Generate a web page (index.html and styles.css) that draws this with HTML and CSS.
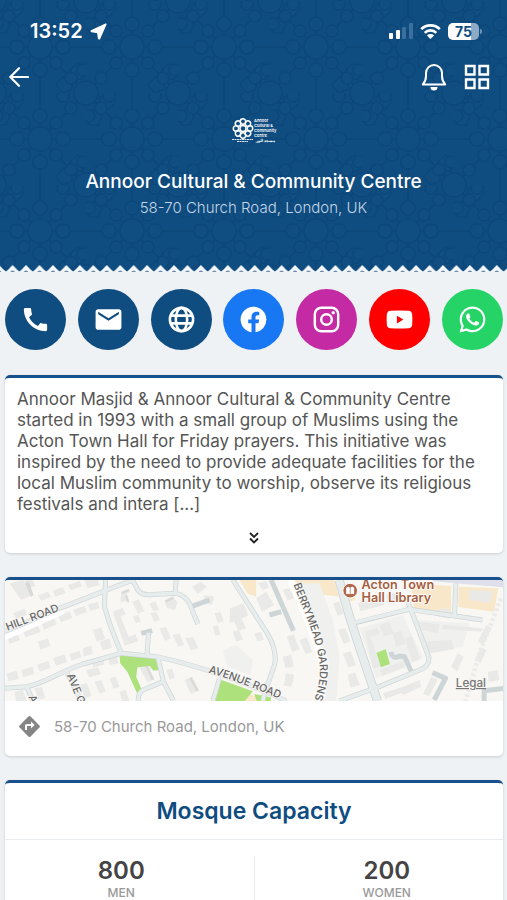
FILE: index.html
```html
<!DOCTYPE html>
<html lang="en">
<head>
<meta charset="utf-8">
<meta name="viewport" content="width=device-width, initial-scale=1">
<title>Annoor Cultural &amp; Community Centre</title>
<link rel="stylesheet" href="styles.css">
</head>
<body>
<header class="hero">
  <svg class="hero-pattern" aria-hidden="true">
    <defs>
      <pattern id="tiles" x="-6" y="1" width="92" height="92" patternUnits="userSpaceOnUse">
        <g id="rosettes" fill="#115084" stroke="#0b4475" stroke-width="1.6">
          <path fill="none" d="M0 46H92M46 0V92M0 0L92 92M92 0L0 92"/>
          <path d="M0 23l8-7 8 7-4 9H4zM92 69l-8-7-8 7 4 9h8zM23 0l7 8-7 8-9-4V4zM69 92l-7-8 7-8 9 4v8z"/>
          <circle cx="46" cy="46" r="12"/>
          <circle cx="0" cy="0" r="12"/><circle cx="92" cy="0" r="12"/><circle cx="0" cy="92" r="12"/><circle cx="92" cy="92" r="12"/>
          <circle cx="46" cy="23" r="7"/><circle cx="46" cy="69" r="7"/><circle cx="23" cy="46" r="7"/><circle cx="69" cy="46" r="7"/>
          <circle cx="30" cy="30" r="6"/><circle cx="62" cy="30" r="6"/><circle cx="30" cy="62" r="6"/><circle cx="62" cy="62" r="6"/>
          <circle cx="23" cy="3" r="6"/><circle cx="69" cy="3" r="6"/><circle cx="3" cy="23" r="6"/><circle cx="89" cy="69" r="6"/>
          <circle cx="15" cy="15" r="6"/><circle cx="77" cy="15" r="6"/><circle cx="15" cy="77" r="6"/><circle cx="77" cy="77" r="6"/>
        </g>
      </pattern>
    </defs>
    <rect width="100%" height="100%" fill="url(#tiles)"/>
  </svg>

  <div class="status">
    <div class="status-side">
      <span class="clock">13:52</span>
      <svg width="17" height="17" viewBox="0 0 17 17" aria-label="Location in use"><path fill="#fff" stroke="#fff" stroke-width="1.600" stroke-linejoin="round" d="M15.800 1.200L1.300 8l.3.500 6.200.9.900 6.200.6.200z"/></svg>
    </div>
    <div class="status-side">
      <svg width="24" height="17" viewBox="0 0 24 17" aria-label="Signal">
        <rect x="0" y="10" width="4" height="6" rx="1" fill="#fff"/><rect x="7" y="7" width="4" height="9" rx="1" fill="#fff"/>
        <rect x="13" y="4" width="4" height="12" rx="1" fill="#3b6f9d"/><rect x="20" y="0" width="4" height="16" rx="1" fill="#3b6f9d"/>
      </svg>
      <svg class="wifi" width="21" height="17" viewBox="0 0 21 17" aria-label="Wi-Fi">
        <path fill="none" stroke="#fff" stroke-width="2.6" d="M1.2 6.2a13.2 13.2 0 0 1 18.6 0M4.7 9.8a8.2 8.2 0 0 1 11.6 0"/>
        <path fill="#fff" d="M10.5 16l-3.6-3.6a5.1 5.1 0 0 1 7.2 0z"/>
      </svg>
      <span class="battery"><span class="battery-level">75</span></span>
    </div>
  </div>

  <nav class="toolbar">
    <button class="icon-button" aria-label="Back">
      <svg width="20" height="20" viewBox="0 0 20 20"><path fill="none" stroke="#fff" stroke-width="2.2" stroke-linecap="round" stroke-linejoin="round" d="M19 10H1.5M10 1.2L1.3 10l8.7 8.8"/></svg>
    </button>
    <div class="toolbar-end">
      <button class="icon-button" aria-label="Notifications">
        <svg width="26" height="28" viewBox="0 0 26 28"><path fill="none" stroke="#fff" stroke-width="2" stroke-linejoin="round" d="M1.8 21.5C4 19 5 16.500 5 13V10a8 8 0 0 1 16 0v3c0 3.500 1 6 3.200 8.500z"/><path fill="#fff" d="M9.500 24h7a3.500 3.500 0 0 1-7 0z"/></svg>
      </button>
      <button class="icon-button" aria-label="Menu">
        <svg width="26" height="26" viewBox="0 0 26 26"><path fill="none" stroke="#fff" stroke-width="2.400" d="M2 2h8.500v8.500H2zM15.500 2H24v8.500h-8.500zM2 15.500h8.500V24H2zM15.500 15.500H24V24h-8.500z"/></svg>
      </button>
    </div>
  </nav>

  <svg class="logo" width="46" height="26" viewBox="0 0 46 26" role="img" aria-label="Annoor logo">
    <g fill="none" stroke="#fff" stroke-width="1.500" transform="translate(12 11.500)">
      <g id="petals"><circle cx="0" cy="-7" r="2.700"/><circle cx="0" cy="7" r="2.700"/><circle cx="-7" cy="0" r="2.700"/><circle cx="7" cy="0" r="2.700"/></g>
      <use href="#petals" transform="rotate(45)"/>
      <circle r="3"/>
    </g>
    <path stroke="#dce7f1" stroke-width="1" stroke-dasharray="2 .5" d="M1 22.500h21M6 24.500h11"/>
    <g class="logo-text">
      <text x="23" y="5">Annoor</text><text x="23" y="10">Cultural &amp;</text><text x="23" y="15">Community</text><text x="23" y="20">Centre</text>
      <text x="25" y="25">مسجد النور</text>
    </g>
  </svg>
  <h1 class="name">Annoor Cultural &amp; Community Centre</h1>
  <p class="address">58-70 Church Road, London, UK</p>

  <svg class="edge" aria-hidden="true">
    <defs>
      <pattern id="teeth" x="5.900" width="13.450" height="7" patternUnits="userSpaceOnUse">
        <path fill="#f3f7f9" d="M0 7V6.600Q1.500 5.500 6.720 0 12 5.500 13.450 6.600V7z"/><path fill="#6d8aa8" d="M4.600 7a2.100 1.500 0 0 1 4.200 0z"/>
      </pattern>
    </defs>
    <rect width="100%" height="7" fill="url(#teeth)"/>
  </svg>
</header>

<main>
  <div class="actions">
    <a class="action" href="#call" aria-label="Call"><svg viewBox="0 0 24 24"><path d="M20.010 15.380c-1.230 0-2.420-.2-3.530-.560-.350-.120-.740-.030-1.010.240l-1.570 1.970c-2.830-1.350-5.480-3.900-6.890-6.830l1.950-1.660c.270-.280.350-.670.240-1.020-.370-1.110-.560-2.300-.560-3.530 0-.540-.450-.990-.990-.990H4.190C3.650 3 3 3.240 3 3.990 3 13.280 10.730 21 20.010 21c.710 0 .990-.630.990-1.180v-3.450c0-.540-.450-.990-.990-.990z"/></svg></a>
    <a class="action" href="#email" aria-label="Email"><svg viewBox="0 0 24 24"><path d="M20 4H4c-1.100 0-1.990.9-1.990 2L2 18c0 1.100.9 2 2 2h16c1.100 0 2-.9 2-2V6c0-1.100-.9-2-2-2zm0 4l-8 5-8-5V6l8 5 8-5v2z"/></svg></a>
    <a class="action" href="#web" aria-label="Website"><svg viewBox="0 0 24 24"><g fill="none" stroke="#fff" stroke-width="2"><circle cx="12" cy="12" r="9"/><ellipse cx="12" cy="12" rx="4.400" ry="9"/><path d="M3.500 9h17M3.500 15h17"/></g></svg></a>
    <a class="action facebook" href="#facebook" aria-label="Facebook"><svg viewBox="0 0 24 24"><path d="M12 2.040C6.500 2.040 2 6.530 2 12.060C2 17.060 5.660 21.210 10.440 21.960V14.960H7.900V12.060H10.440V9.850C10.440 7.340 11.930 5.960 14.220 5.960C15.310 5.960 16.450 6.150 16.450 6.150V8.620H15.190C13.950 8.620 13.560 9.390 13.560 10.180V12.060H16.340L15.890 14.960H13.560V21.960A10 10 0 0 0 22 12.060C22 6.530 17.500 2.040 12 2.040Z"/></svg></a>
    <a class="action instagram" href="#instagram" aria-label="Instagram"><svg viewBox="0 0 24 24"><g fill="none" stroke="#fff" stroke-width="1.900"><rect x="2.950" y="2.950" width="18.100" height="18.100" rx="5"/><circle cx="12" cy="12" r="4.100"/></g><circle cx="17.200" cy="6.800" r="1.300"/></svg></a>
    <a class="action youtube" href="#youtube" aria-label="YouTube"><svg viewBox="0 0 24 24"><path fill-rule="evenodd" d="M5 5.200Q12 4.700 19 5.200 21.500 5.400 21.800 8 22.200 12 21.800 16 21.500 18.600 19 18.800 12 19.300 5 18.800 2.500 18.600 2.200 16 1.800 12 2.200 8 2.500 5.400 5 5.200zM10 9v6l5-3z"/></svg></a>
    <a class="action whatsapp" href="#whatsapp" aria-label="WhatsApp"><svg viewBox="0 0 24 24"><path d="M12.040 2C6.580 2 2.130 6.450 2.130 11.910C2.130 13.660 2.590 15.360 3.450 16.860L2.050 22L7.300 20.620C8.750 21.410 10.380 21.830 12.040 21.830C17.500 21.830 21.950 17.380 21.950 11.920C21.950 9.270 20.920 6.780 19.050 4.910C17.180 3.030 14.690 2 12.040 2M12.050 3.670C14.250 3.670 16.310 4.530 17.870 6.090C19.420 7.650 20.280 9.720 20.280 11.920C20.280 16.460 16.580 20.150 12.040 20.150C10.560 20.150 9.110 19.760 7.850 19L7.550 18.830L4.430 19.650L5.260 16.610L5.060 16.290C4.240 15 3.800 13.470 3.800 11.910C3.810 7.370 7.500 3.670 12.050 3.670M8.530 7.330C8.370 7.330 8.100 7.390 7.870 7.640C7.650 7.890 7 8.500 7 9.710C7 10.930 7.890 12.100 8 12.270C8.140 12.440 9.760 14.940 12.250 16C12.840 16.270 13.300 16.420 13.660 16.530C14.250 16.720 14.790 16.690 15.220 16.630C15.700 16.560 16.680 16.030 16.890 15.450C17.100 14.870 17.100 14.380 17.040 14.270C16.970 14.170 16.810 14.110 16.560 14C16.310 13.860 15.090 13.260 14.870 13.180C14.640 13.100 14.500 13.060 14.310 13.300C14.150 13.550 13.670 14.110 13.530 14.270C13.380 14.440 13.240 14.460 13 14.340C12.740 14.210 11.940 13.950 11 13.110C10.260 12.450 9.770 11.640 9.620 11.390C9.500 11.150 9.610 11 9.730 10.890C9.840 10.780 10 10.600 10.100 10.450C10.230 10.310 10.270 10.200 10.350 10.040C10.430 9.870 10.390 9.730 10.330 9.610C10.270 9.500 9.770 8.260 9.560 7.770C9.360 7.290 9.160 7.350 9 7.340C8.860 7.340 8.700 7.330 8.530 7.330Z"/></svg></a>
  </div>

  <section class="card about">
    <p class="about-text">Annoor Masjid &amp; Annoor Cultural &amp; Community Centre started in 1993 with a small group of Muslims using the Acton Town Hall for Friday prayers. This initiative was inspired by the need to provide adequate facilities for the local Muslim community to worship, observe its religious festivals and intera [...]</p>
    <button class="more" aria-label="Show more"><svg width="10" height="12" viewBox="0 0 10 12"><path fill="none" stroke="#222" stroke-width="1.800" d="M1 1l4 4 4-4M1 6.500l4 4 4-4"/></svg></button>
  </section>

  <section class="card">
    <svg class="map" viewBox="15 30 1497 363" preserveAspectRatio="xMidYMid slice" role="img" aria-label="Map of Church Road, London">
      <rect x="15" y="30" width="1497" height="363" fill="#f8f7f4"/>
      <g fill="#f8e8c9">
        <path d="M720 30h50v50l-25-8zM874 30h130l14 50-60-8-50 10zM1235 40l120 8v92l-112-22zM1378 50l118 5-12 70-108-14zM1030 75l30-5 8 20-30 8zM740 370l40 12-6 11h-36z"/>
      </g>
      <path fill="#dedfeb" d="M1300 30h212v22l-90-8-122-10z"/>
      <path fill="#f0f0ee" d="M890 40l70 0 40 110 20 110-10 133h-35l15-110-40-120zM1080 175l130-40 60 130-140 60zM1250 150l160 10-20 70-110 15zM670 240l40-15 50 45-6 45-70-25z"/>
      <g fill="#e9e9e7">
        <path d="M30 40l40-10 30 45-35 15zM75 32l25-2 8 18-20 6zM115 75l30-10 10 15-30 12zM160 62l30-11 8 18-30 11zM205 45l35-12 8 16-34 12zM255 30h40l5 15-36 10zM40 130l35-14 8 18-32 14zM20 195l30-11 12 26-32 12zM68 180l45-18 10 24-44 16zM125 158l38-15 9 20-38 16zM175 138l35-14 9 20-34 13zM220 120l35-12 8 18-33 12zM265 104l30-9 5 20-28 8z"/>
        <path d="M115 215l30-10 8 22-30 12zM280 180l25-8 12 35-25 8zM300 215l30-10 8 28-28 8zM250 235l25-8 5 25-28 8zM210 252l30-10 6 20-30 10zM160 265l35-12 8 22-33 12zM112 285l34-12 8 20-32 12zM65 300l34-10 6 22-34 10zM22 310l30-8 6 26-32 6z"/>
        <path d="M340 125l30-12 8 20-15 6 25 62 20-8 8 20-40 14zM365 65l22-10 4 12-10 4 8 22-26 4zM398 95l20-7 16 35-18 8zM400 140l15-6 10 20-16 6zM495 90l25-12 14 20-8 22-24-6zM450 100l18-5 10 24-16 6zM453 130l18-4 10 24-16 6zM480 175l20-4 14 34-18 8zM520 195l20-4 14 34-18 6zM558 205l24-4 14 34-22 6zM578 50l25-15 20 15-28 22zM615 75l30 5-8 25-28-5zM645 130l18-4 10 28-18 5zM640 170l15-4 8 28-16 3zM692 115l40-15 14 36-20 10 14 28-24 10-12-30-14 4zM700 185l18-6 12 30-20 6z"/>
        <path d="M275 270l35-8 5 22-34 8zM325 262l25-6 8 24-27 5zM260 300l35-8 10 20-36 10zM45 365l25-5 12 33H50zM105 355l22-5 10 34-20 5zM240 345l22-6 14 38-20 8zM285 335l20-5 14 34-18 8zM330 325l18-5 12 30-18 6zM360 365l18-6 12 34h-22zM418 292l28-8 20 44-22 8zM555 330l24-10 20 42-25 10zM500 300l18-4 8 28-16 4z"/>
        <path d="M770 85l30-20 24 40-36 20zM765 190l20-4 8 24-20 4zM775 40l25-6 10 18-20 8zM850 60l20-6 14 30-20 8zM862 200l20-8 18 46-22 8zM850 260l25-6 8 36-26 4zM860 310l24 4-8 36-24-4zM900 210l22-8 16 44-20 6zM1000 100l20-5 12 36-18 6zM1015 180l22-6 16 40-20 8zM1030 250l24-6 16 42-24 6zM1045 315l22-8 14 38-28 8z"/>
        <path d="M1095 185l38-12 8 18-28 10 30 88-22 8zM1140 165l30-8 12 34-30 8zM1180 190l25-8 14 40-30 8zM1215 205l22-6 24 68-22 8zM1140 300l70-26 8 18-70 26zM1075 100l70-20 10 24-72 20zM1160 75l44-12 8 26-46 12zM1250 155l70 8-4 26-60-10zM1330 165l120 10-4 10-118-8zM1275 215l80-6 10 28-80 14zM1295 320l20 8-26 50-18-6zM1355 290l20-40 18 10-20 44zM1410 60l70 4-10 34-60-8zM1435 215l25-50 16 8-22 50zM1425 270l20-38 16 8-18 40zM1150 370l80-26 8 14-80 28zM1200 355l60-25 5 20-54 25zM1465 305l30-4 4 30-32 4zM1320 115l35 5-4 26-34-6z"/>
      </g>
      <g fill="#d9d9d7"><path d="M88 34l14 42-8 4-18-42zM366 66l22-8 2 6-22 8zM383 75l6 20-4 4-8-20zM443 286l20 42-6 3-20-43zM575 322l22 38-6 4-22-40zM496 92l24-12 3 6-24 12z"/></g>
      <g fill="#ade17b">
        <path d="M360 252l112 10 6 38-16 2-12-14-36 4-4 28 18 42-16 6-28-62-22-26z"/>
        <path d="M660 328l100 36-24 29h-92zM764 372l50 10v11h-42zM1131 248l28-10 12 44-27 10z"/>
      </g>
      <path fill="none" stroke="#fff" stroke-width="22" d="M15 200L190 122M873 30C900 90 930 150 955 235S975 320 958 393"/>
      <g fill="none" stroke-linejoin="round">
        <path id="roads" stroke="#ced5d6" stroke-width="15" d="M15 185L180 115 400 30M318 30L315 110 330 160 365 250M15 355L80 350C130 343 170 310 250 282L365 250 470 260C560 278 650 306 800 365L860 393M400 32L415 60Q425 75 450 74L530 70Q556 76 570 100L595 162M530 30L527 70M575 110L630 90M443 252L447 188M425 190L458 182M475 262L492 335 522 393M416 393Q415 370 430 360L492 335M640 393L660 325M200 303L245 393M82 352L100 393M700 30L800 185Q835 240 825 285L795 370 790 393M815 30L882 182M810 135L845 125"/>
        <path stroke="#e7ecec" stroke-width="11" d="M15 185L180 115 400 30M318 30L315 110 330 160 365 250M15 355L80 350C130 343 170 310 250 282L365 250 470 260C560 278 650 306 800 365L860 393M400 32L415 60Q425 75 450 74L530 70Q556 76 570 100L595 162M530 30L527 70M443 252L447 188M475 262L492 335 522 393M416 393Q415 370 430 360L492 335M640 393L660 325M200 303L245 393M82 352L100 393M700 30L800 185Q835 240 825 285L795 370 790 393"/>
        <path stroke="#ced5d6" stroke-width="15" d="M1060 160L1229 118 1449 150M1220 82L1269 210 1288 262Q1290 290 1260 300L1139 350 1019 393M1369 40L1365 138M1174 246Q1180 270 1200 258L1215 260 1235 304M1299 308L1338 325 1304 390M1454 393V362L1512 355"/>
        <path stroke="#ced5d6" stroke-width="27" d="M1019 30L1050 140 1076 220 1134 393"/>
        <path stroke="#e7ecec" stroke-width="22" d="M1019 30L1050 140 1076 220 1134 393"/>
        <path stroke="#e7ecec" stroke-width="11" d="M1055 160L1229 118 1449 150M1220 82L1269 210 1288 262Q1290 290 1260 300L1139 350 1019 393M1369 40L1365 138"/>
        <path stroke="#ebebea" stroke-width="14" stroke-dasharray="9 7" d="M1504 85L1440 250 1398 393"/>
      </g>
      <defs>
        <path id="hill" d="M24 182L210 111"/>
        <path id="avenue" d="M626 308C700 328 770 358 870 398"/>
        <path id="berry" d="M882 44C902 100 936 170 950 228S970 320 938 410"/>
        <path id="aveg" d="M202 316L250 434"/>
        <path id="avea" d="M86 380L106 430"/>
      </defs>
      <g class="street">
        <text><textPath href="#hill">HILL ROAD</textPath></text>
        <text><textPath href="#avenue">AVENUE ROAD</textPath></text>
        <text><textPath href="#berry">BERRYMEAD GARDENS</textPath></text>
        <text><textPath href="#aveg">AVE G</textPath></text>
        <text><textPath href="#avea">A</textPath></text>
      </g>
      <circle cx="1052" cy="62" r="22" fill="#b0674a" stroke="#fff" stroke-width="3"/>
      <path fill="#fff" d="M1040 53q7-5 11 0v20q-5-4-11 0zM1064 53q-7-5-11 0v20q5-4 11 0z"/>
      <g class="place"><text x="1086" y="57">Acton Town</text><text x="1086" y="96">Hall Library</text></g>
      <text class="legal" x="1369" y="351">Legal</text>
    </svg>
    <a class="directions" href="#directions">
      <svg width="21" height="21" viewBox="0 0 21 21" aria-hidden="true"><path fill="#858585" d="M9.400.6q1.100-1.100 2.200 0l8.800 8.800q1.100 1.100 0 2.200l-8.800 8.800q-1.100 1.100-2.200 0L.6 11.600q-1.100-1.100 0-2.200z"/><path fill="#fff" d="M6 14V9.500Q6 8 7.500 8H12V5.500L15.700 9 12 12.500V10H8v4z"/></svg>
      <span>58-70 Church Road, London, UK</span>
    </a>
  </section>

  <section class="card">
    <h2 class="card-title">Mosque Capacity</h2>
    <dl class="stats">
      <div class="stat"><dd>800</dd><dt>MEN</dt></div>
      <div class="stat"><dd>200</dd><dt>WOMEN</dt></div>
    </dl>
  </section>
</main>
</body>
</html>
```
FILE: styles.css
```css
* {
  box-sizing: border-box;
}

body {
  margin: 0;
  height: 100vh;
  overflow: hidden;
  background: #eef2f5;
  color: #555;
  font-family: Inter, "Liberation Sans", sans-serif;
}

button {
  padding: 0;
  border: 0;
  background: none;
}

svg {
  display: block;
}

.hero {
  position: relative;
  display: flex;
  flex-direction: column;
  background: #0f4c80;
  color: #fff;
}

.hero > * {
  position: relative;
}

.hero .hero-pattern {
  position: absolute;
  inset: 0;
  width: 100%;
  height: 100%;
  opacity: 0.5;
}

.status {
  display: flex;
  align-items: center;
  justify-content: space-between;
  height: 62px;
  padding: 0 25px 0 30px;
}

.status-side {
  display: flex;
  align-items: center;
  gap: 7px;
}

.clock {
  font-size: 20px;
  font-weight: 600;
}

.battery {
  position: relative;
  width: 31px;
  height: 17px;
  margin-right: 3px;
  border-radius: 5px;
  background: linear-gradient(90deg, #fff 75%, #8faac4 75%);
}

.battery::after {
  content: "";
  position: absolute;
  top: 6px;
  right: -3px;
  width: 2px;
  height: 5px;
  border-radius: 0 2px 2px 0;
  background: #6f93b3;
}

.battery-level {
  display: block;
  color: #0f4c80;
  font-size: 14px;
  font-weight: 700;
  line-height: 17px;
  text-align: center;
}

.toolbar {
  display: flex;
  align-items: center;
  justify-content: space-between;
  height: 30px;
  padding: 0 17px 0 9px;
}

.toolbar-end {
  display: flex;
  align-items: center;
  gap: 17px;
}

.logo {
  align-self: center;
  margin-top: 25px;
  overflow: visible;
}

.logo-text {
  fill: #fff;
  font-size: 4px;
  font-weight: 600;
}

.name {
  margin: 26px 0 0;
  font-size: 19px;
  font-weight: 500;
  line-height: 26px;
  text-align: center;
}

.address {
  margin: 3px 0 47px;
  color: #c3d6e8;
  font-size: 15px;
  font-weight: 300;
  line-height: 20px;
  text-align: center;
}

.edge {
  width: 100%;
  height: 7px;
}

main {
  padding: 0 4px 0 5px;
}

.actions {
  display: flex;
  justify-content: space-between;
  padding: 17px 0 25px;
}

.action {
  display: flex;
  align-items: center;
  justify-content: center;
  width: 61px;
  height: 61px;
  border-radius: 50%;
  background: #0f4c80;
}

.action svg {
  width: 31px;
  height: 31px;
  fill: #fff;
}

.facebook {
  background: #1877f2;
}

.instagram {
  background: #c32aa3;
}

.youtube {
  background: #f00;
}

.whatsapp {
  background: #25d366;
}

.card {
  margin-bottom: 24px;
  overflow: hidden;
  border-top: 3px solid #17508a;
  border-radius: 5px;
  background: #fff;
  box-shadow: 0 1px 3px rgba(0, 0, 0, 0.15);
}

.about-text {
  margin: 0;
  padding: 11px 12px 0;
  font-size: 17px;
  line-height: 21px;
}

.more {
  display: flex;
  align-items: center;
  justify-content: center;
  width: 100%;
  height: 38px;
  padding-top: 8px;
}

.map {
  width: 100%;
  height: 121px;
}

.street {
  fill: #666;
  stroke: #f8f7f4;
  stroke-width: 5px;
  paint-order: stroke;
  font-size: 32px;
  font-weight: 500;
}

.place {
  fill: #a85d3f;
  stroke: #fff;
  stroke-width: 5px;
  paint-order: stroke;
  font-size: 38px;
  font-weight: 600;
}

.legal {
  fill: #777;
  font-size: 35px;
  font-weight: 500;
  text-decoration: underline;
}

.directions {
  display: flex;
  align-items: center;
  gap: 14px;
  height: 55px;
  padding: 0 14px 4px;
  color: #999;
  font-size: 15px;
  text-decoration: none;
}

.card-title {
  margin: 0;
  padding: 13px 0;
  border-bottom: 1px solid #e9ecee;
  color: #0f4c80;
  font-size: 23px;
  font-weight: 600;
  line-height: 30px;
  text-align: center;
}

.stats {
  display: flex;
  margin: 0 -16px;
  padding: 16px 0;
}

.stat {
  flex: 1;
  text-align: center;
}

.stat + .stat {
  border-left: 1px solid #e9ecee;
}

.stat dd {
  margin: 0;
  color: #444;
  font-size: 24px;
  font-weight: 600;
  line-height: 30px;
}

.stat dt {
  color: #999;
  font-size: 12px;
  font-weight: 500;
  line-height: 14px;
}
```
